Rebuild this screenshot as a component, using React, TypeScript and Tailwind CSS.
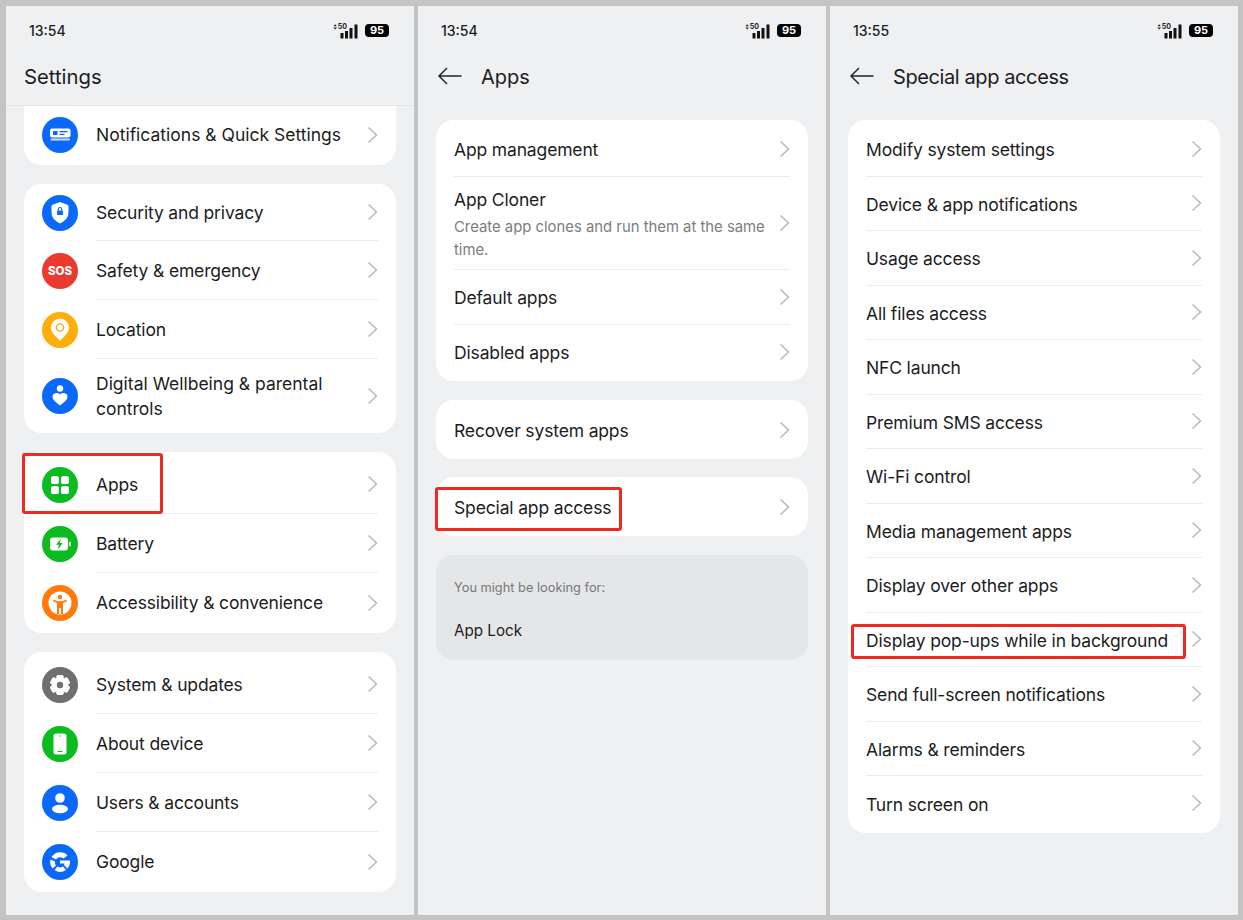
import React from "react";

const FONT = "font-['Inter','Noto_Sans',sans-serif]";
const LABEL = "text-[17.5px] tracking-[-0.15px] leading-[25px] text-[#1c1c1e]";

function Chevron() {
  return (
    <svg width="11" height="18" viewBox="0 0 11 18" fill="none" className="shrink-0">
      <path d="M1.5 1.5 L9.5 9 L1.5 16.5" stroke="#b9b9bb" strokeWidth="1.5" />
    </svg>
  );
}

function Circle({ color, children }: { color: string; children?: React.ReactNode }) {
  return (
    <svg width="36" height="36" viewBox="0 0 36 36" className="shrink-0">
      <circle cx="18" cy="18" r="18" fill={color} />
      {children}
    </svg>
  );
}

const BLUE = "#0a69fb";
const GREEN = "#0cbb1f";

const icons: Record<string, React.ReactNode> = {
  notif: (
    <Circle color={BLUE}>
      <rect x="8" y="11.5" width="20.5" height="9" rx="2" fill="#fff" />
      <rect x="8.5" y="21.5" width="19.5" height="2" rx="1" fill="#cfe0fd" />
      <rect x="11" y="14" width="4.5" height="4" fill={BLUE} />
      <rect x="17.5" y="14" width="8" height="1.3" fill={BLUE} />
      <rect x="17.5" y="16.8" width="5" height="1.3" fill={BLUE} />
    </Circle>
  ),
  shield: (
    <Circle color={BLUE}>
      <path d="M18 7.5 L26 10.5 V17.5 C26 22.5 22.5 26 18 28 C13.5 26 10 22.5 10 17.5 V10.5 Z" fill="#fff" strokeLinejoin="round" stroke="#fff" strokeWidth="1" />
      <rect x="15" y="15.5" width="6" height="4.5" rx="0.8" fill={BLUE} />
      <path d="M16.3 15.5 V14.2 A1.7 1.7 0 0 1 19.7 14.2 V15.5" fill="none" stroke={BLUE} strokeWidth="1.2" />
    </Circle>
  ),
  sos: (
    <svg width="36" height="36" viewBox="0 0 36 36" className="shrink-0">
      <circle cx="18" cy="18" r="18" fill="#ea3a2f" />
      <text x="18" y="22" textAnchor="middle" fontSize="11.5" fontWeight="800" fill="#fff" fontFamily="Inter, sans-serif">SOS</text>
    </svg>
  ),
  pin: (
    <Circle color="#ffae0a">
      <path d="M18 29 C15.5 25.5 9 21.5 9 15.5 A9 9 0 0 1 27 15.5 C27 21.5 20.5 25.5 18 29 Z" fill="#fff" />
      <circle cx="18" cy="15.5" r="3.6" fill="none" stroke="#f4ab18" strokeWidth="1.4" />
    </Circle>
  ),
  well: (
    <Circle color={BLUE}>
      <circle cx="18" cy="10.5" r="3.2" fill="#fff" />
      <path d="M18 27.5 C15 25 10.5 22.5 10.5 18.5 C10.5 15 15.5 13.8 18 16.5 C20.5 13.8 25.5 15 25.5 18.5 C25.5 22.5 21 25 18 27.5 Z" fill="#fff" />
    </Circle>
  ),
  apps: (
    <Circle color={GREEN}>
      <rect x="9" y="9" width="8" height="8" rx="2.6" fill="#fff" />
      <rect x="19" y="9" width="8" height="8" rx="2.6" fill="#fff" />
      <rect x="9" y="19" width="8" height="8" rx="2.6" fill="#fff" />
      <rect x="19" y="19" width="8" height="8" rx="2.6" fill="#fff" />
    </Circle>
  ),
  battery: (
    <Circle color={GREEN}>
      <rect x="8" y="11.5" width="18" height="13" rx="3" fill="#fff" />
      <rect x="27.2" y="15.5" width="1.5" height="5" rx="0.7" fill="#fff" />
      <path d="M18.8 12.8 L14 18.8 H16.8 L15.8 23.2 L20.8 17 H17.8 Z" fill={GREEN} />
    </Circle>
  ),
  access: (
    <Circle color="#ff7a0a">
      <circle cx="18" cy="18" r="11.5" fill="#fff" />
      <circle cx="18" cy="12" r="2.2" fill="#ff7a0a" />
      <path d="M11.5 14.8 L16 16.2 H20 L24.5 14.8 L25 16.2 L21 18 V29 H19 V23 H17 V29 H15 V18 L11 16.2 Z" fill="#ff7a0a" />
    </Circle>
  ),
  gear: (
    <Circle color="#6f6f6f">
      {[0, 60, 120, 180, 240, 300].map((a) => (
        <rect key={a} x="14.5" y="8" width="7" height="20" rx="1.8" fill="#fff" transform={`rotate(${a} 18 18)`} />
      ))}
      <circle cx="18" cy="18" r="7.5" fill="#fff" />
      <circle cx="18" cy="18" r="3.2" fill="#6f6f6f" />
    </Circle>
  ),
  phone: (
    <Circle color={GREEN}>
      <rect x="11.5" y="7.5" width="13" height="21" rx="2.5" fill="#fff" />
      <circle cx="18" cy="10" r="0.7" fill={GREEN} />
      <rect x="15.5" y="25" width="5" height="1" fill={GREEN} />
    </Circle>
  ),
  user: (
    <Circle color={BLUE}>
      <circle cx="18" cy="13" r="4.8" fill="#fff" />
      <ellipse cx="18" cy="24" rx="8" ry="4.2" fill="#fff" />
    </Circle>
  ),
  google: (
    <Circle color={BLUE}>
      <path d="M25.5 11.5 A10 10 0 0 0 9.5 13 L14 15.5 A5 5 0 0 1 21.5 14.5 Z" fill="#fff" />
      <path d="M8.5 15.5 A10 10 0 0 0 10.5 24.5 L14 21.5 A5 5 0 0 1 13 17.5 Z" fill="#fff" />
      <path d="M12.5 26 A10 10 0 0 0 24 26 L21 22.5 A5 5 0 0 1 15.5 22.5 Z" fill="#fff" />
      <path d="M18 16.5 H28 V19 A10 10 0 0 1 25.5 24.5 L22 21 L22.5 19.5 H18 Z" fill="#fff" />
    </Circle>
  ),
};

function StatusBar({ time }: { time: string }) {
  return (
    <div className="flex h-[48px] items-center justify-between pl-[23px] pr-[25px] pt-[1px] shrink-0">
      <span className="text-[14px] font-medium text-[#1c1c1e]">{time}</span>
      <div className="flex items-center gap-[7px]">
        <svg width="25" height="16" viewBox="0 0 25 16">
          <path d="M0.5 3.2 L2.2 1.2 L3.9 3.2 Z M0.5 4.4 L2.2 6.4 L3.9 4.4 Z" fill="#222" />
          <text x="4.8" y="6" fontSize="7" fontWeight="700" fill="#222" fontFamily="Inter, sans-serif">50</text>
          <rect x="7.5" y="10" width="3" height="5.5" fill="#111" />
          <rect x="12" y="8" width="3" height="7.5" fill="#111" />
          <rect x="16.5" y="5" width="3" height="10.5" fill="#111" />
          <rect x="21.5" y="1.5" width="3" height="14" fill="#111" />
        </svg>
        <span className="flex h-[13px] w-[24px] items-center justify-center rounded-[4px] bg-black text-[11px] font-bold leading-none text-white">95</span>
      </div>
    </div>
  );
}

function Back() {
  return (
    <svg width="24" height="18" viewBox="0 0 24 18" fill="none" className="shrink-0">
      <path d="M9 1 L1 9 L9 17 M1 9 H23.5" stroke="#222" strokeWidth="1.5" />
    </svg>
  );
}

function SubHeader({ title, className = "" }: { title: string; className?: string }) {
  return (
    <div className="flex h-[51px] items-center pb-[7px] pl-[20px] gap-[19px] shrink-0">
      <Back />
      <span className={`pt-[2px] text-[20px] text-[#1c1c1e] ${className}`}>{title}</span>
    </div>
  );
}

function IconRow({ icon, label, h, last, wide }: { icon: string; label: React.ReactNode; h: string; last?: boolean; wide?: boolean }) {
  return (
    <div className={`flex items-center ${h}`}>
      <div className="w-[54px] shrink-0">{icons[icon]}</div>
      <div className={`flex h-full flex-1 items-center justify-between ${last ? "" : "border-b border-[#ececee]"}`}>
        <span className={`max-w-[262px] ${LABEL} ${wide ? "tracking-normal" : ""}`}>{label}</span>
        <Chevron />
      </div>
    </div>
  );
}

function TextRow({ label, sub, last }: { label: string; sub?: string; last?: boolean }) {
  return (
    <div className={`flex items-center justify-between ${sub ? "h-[93.5px]" : "h-[54.5px]"} ${last ? "" : "border-b border-[#ececee]"}`}>
      <div className={sub ? "pt-[4px]" : "pt-[2px]"}>
        <div className={LABEL}>{label}</div>
        {sub && <div className="mt-[4px] w-[320px] text-[14.85px] leading-[23px] text-[#7c7c7e]">{sub}</div>}
      </div>
      <Chevron />
    </div>
  );
}

function Panel({ children }: { children: React.ReactNode }) {
  return <div className="relative flex h-[909px] w-[408px] shrink-0 flex-col bg-[#eff0f2]">{children}</div>;
}

function Card({ children, className = "" }: { children: React.ReactNode; className?: string }) {
  return <div className={`mx-[18px] rounded-[18px] bg-white px-[18px] ${className}`}>{children}</div>;
}

const special = [
  "Modify system settings",
  "Device & app notifications",
  "Usage access",
  "All files access",
  "NFC launch",
  "Premium SMS access",
  "Wi-Fi control",
  "Media management apps",
  "Display over other apps",
  "Display pop-ups while in background",
  "Send full-screen notifications",
  "Alarms & reminders",
  "Turn screen on",
];

function Highlight({ className }: { className: string }) {
  return <div className={`absolute rounded-[3px] border-[3px] border-[#ee2a24] ${className}`} />;
}

export default function App() {
  return (
    <div className={`${FONT} flex h-[920px] w-[1243px] gap-[4px] overflow-hidden bg-[#c4c4c4] pl-[6px] pt-[6px]`}>
      <Panel>
        <StatusBar time="13:54" />
        <div className="flex h-[52px] items-center border-b border-[#e4e5e7] pb-[7px] pl-[18px] shrink-0">
          <span className="pt-[2px] text-[20.3px] text-[#1c1c1e]">Settings</span>
        </div>
        <Card className="rounded-t-none">
          <IconRow icon="notif" label="Notifications & Quick Settings" h="h-[59px] pb-[2px]" last wide />
        </Card>
        <Card className="mt-[19px]">
          <IconRow icon="shield" label="Security and privacy" h="h-[57px]" />
          <IconRow icon="sos" label="Safety & emergency" h="h-[59px]" />
          <IconRow icon="pin" label="Location" h="h-[59px]" />
          <IconRow icon="well" label="Digital Wellbeing & parental controls" h="h-[74px]" last wide />
        </Card>
        <Card className="mt-[19px] pb-[1px] pt-[3px]">
          <IconRow icon="apps" label="Apps" h="h-[59px]" />
          <IconRow icon="battery" label="Battery" h="h-[59px]" />
          <IconRow icon="access" label="Accessibility & convenience" h="h-[59px]" last />
        </Card>
        <Card className="mt-[19px] pb-[1px] pt-[3px]">
          <IconRow icon="gear" label="System & updates" h="h-[59px]" />
          <IconRow icon="phone" label="About device" h="h-[59px]" />
          <IconRow icon="user" label="Users & accounts" h="h-[59px]" />
          <IconRow icon="google" label="Google" h="h-[59px]" last />
        </Card>
        <Highlight className="left-[16px] top-[447px] h-[61px] w-[141px]" />
      </Panel>

      <Panel>
        <StatusBar time="13:54" />
        <SubHeader title="Apps" />
        <Card className="mt-[15px] py-[2px]">
          <TextRow label="App management" />
          <TextRow label="App Cloner" sub="Create app clones and run them at the same time." />
          <TextRow label="Default apps" />
          <TextRow label="Disabled apps" last />
        </Card>
        <Card className="mt-[19px]">
          <div className="flex h-[59px] items-center justify-between">
            <span className={`pt-[2px] ${LABEL}`}>Recover system apps</span>
            <Chevron />
          </div>
        </Card>
        <Card className="mt-[18px]">
          <div className="flex h-[59px] items-center justify-between">
            <span className={`pt-[2px] ${LABEL}`}>Special app access</span>
            <Chevron />
          </div>
        </Card>
        <Card className="mt-[19px] h-[105px] !bg-[#e5e6e8] pt-[24px]">
          <div className="text-[12.8px] leading-[18px] text-[#77777a]">You might be looking for:</div>
          <div className="mt-[24px] text-[15.2px] leading-[20px] text-[#1c1c1e]">App Lock</div>
        </Card>
        <Highlight className="left-[17px] top-[481px] h-[44px] w-[187px]" />
      </Panel>

      <Panel>
        <StatusBar time="13:55" />
        <SubHeader title="Special app access" className="tracking-[-0.4px]" />
        <Card className="mt-[15px] py-[2px]">
          {special.map((s, i) => (
            <TextRow key={s} label={s} last={i === special.length - 1} />
          ))}
        </Card>
        <Highlight className="left-[21px] top-[618px] h-[35px] w-[335px]" />
      </Panel>
    </div>
  );
}
